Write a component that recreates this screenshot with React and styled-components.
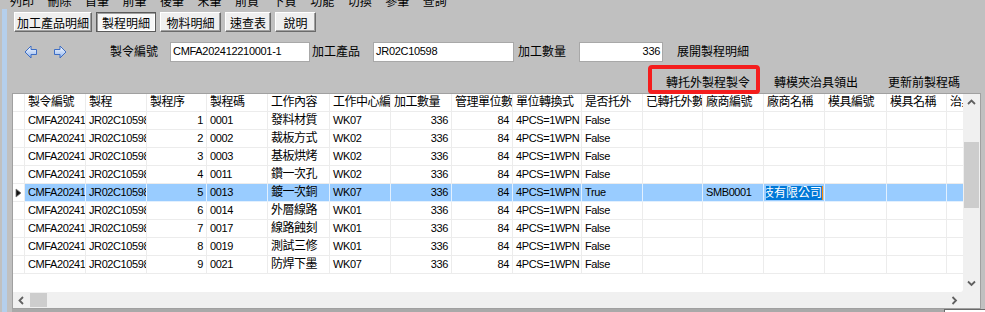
import React from "react";
import styled, { createGlobalStyle } from "styled-components";

const Global = createGlobalStyle`
  html, body { margin: 0; padding: 0; }
  body {
    background: #c0c0c0;
    font-family: "Liberation Sans", "Noto Sans CJK TC", sans-serif;
    font-size: 12px;
    color: #000;
    width: 985px;
    height: 312px;
    overflow: hidden;
  }
`;

const Page = styled.div`
  display: flex;
  flex-direction: column;
  height: 312px;
  overflow: hidden;
`;

const MenuBar = styled.div`
  height: 9px;
  overflow: hidden;
  display: flex;
  gap: 13.5px;
  padding-left: 10px;
`;

const MenuItem = styled.span`
  display: block;
  line-height: 13px;
  margin-top: -4px;
  white-space: nowrap;
`;

const Body = styled.div`
  flex: 1;
  display: flex;
  min-height: 0;
`;

const Strip = styled.div`
  width: 5px;
  margin-left: 2px;
  background: #b5cfec;
`;

const Content = styled.div`
  flex: 1;
  display: flex;
  flex-direction: column;
  padding: 0 4px 0 5px;
  min-width: 0;
`;

const Tabs = styled.div`
  display: flex;
  gap: 4px;
  margin-top: 3px;
  padding-left: 2px;
`;

const Tab = styled.button`
  width: ${(p) => p.$w}px;
  height: 20px;
  padding: 0;
  font: inherit;
  font-size: 12px;
  color: #000;
  background: ${(p) => (p.$active ? "#f7f7f7" : "#efefef")};
  border: 1px solid;
  border-color: ${(p) =>
    p.$active ? "#5a5a5a" : "#ffffff #6a6a6a #6a6a6a #ffffff"};
  box-shadow: ${(p) =>
    p.$active
      ? "inset 1px 1px 0 #a0a0a0, inset -1px -1px 0 #ffffff"
      : "inset -1px -1px 0 #a0a0a0"};
  display: flex;
  align-items: center;
  justify-content: center;
  white-space: nowrap;
`;

const FormRow = styled.div`
  display: flex;
  align-items: center;
  height: 20px;
  margin-top: 10px;
`;

const NavButton = styled.span`
  display: flex;
  width: 14px;
  height: 14px;
  margin-left: ${(p) => p.$ml}px;
`;

const Label = styled.span`
  margin-left: ${(p) => p.$ml}px;
  white-space: nowrap;
  line-height: 20px;
`;

const Input = styled.div`
  box-sizing: border-box;
  margin-left: ${(p) => p.$ml}px;
  width: ${(p) => p.$w}px;
  height: 20px;
  background: #fff;
  border: 1px solid #a8a8a8;
  padding: 0 2px;
  font-size: 11px;
  line-height: 16px;
  letter-spacing: -0.3px;
  text-align: ${(p) => (p.$right ? "right" : "left")};
  white-space: nowrap;
  overflow: hidden;
`;

const ActionRow = styled.div`
  display: flex;
  justify-content: flex-end;
  padding-right: 3px;
  margin-top: 8px;
  margin-bottom: 1px;
`;

const FlatButton = styled.button`
  position: relative;
  width: 108px;
  height: 22px;
  padding: 0;
  font: inherit;
  font-size: 12px;
  color: #000;
  background: transparent;
  border: none;
  white-space: nowrap;
  &::after {
    content: "";
    display: ${(p) => (p.$marked ? "block" : "none")};
    position: absolute;
    left: -6px;
    right: 2px;
    top: -5px;
    bottom: -2px;
    border: 4px solid #f41d1d;
    border-radius: 4px;
    z-index: 2;
  }
`;

const GridBox = styled.div`
  box-sizing: border-box;
  height: 216px;
  border: 1px solid #a0a0a0;
  display: grid;
  grid-template-columns: 1fr 17px;
  grid-template-rows: 1fr 16px;
  background: #f0f0f0;
`;

const DataArea = styled.div`
  background: #fff;
  overflow: hidden;
  border-bottom-right-radius: 3px;
`;

const TEMPLATE =
  "12px 61px 61px 60px 61px 62px 61px 61px 61px 69px 61px 60px 61px 61px 62px 60px 61px";

const Row = styled.div`
  display: grid;
  grid-template-columns: ${TEMPLATE};
  width: max-content;
  height: 18px;
`;

const Cell = styled.div`
  box-sizing: border-box;
  height: 18px;
  padding: 0 3px;
  line-height: 17px;
  border-right: 1px solid ${(p) => (p.$sel ? "#e2f0fe" : "#ececec")};
  border-bottom: 1px solid ${(p) => (p.$sel ? "#e2f0fe" : "#ececec")};
  background: ${(p) => (p.$sel ? "#99ccff" : "#fff")};
  text-align: ${(p) => (p.$right ? "right" : "left")};
  white-space: nowrap;
  overflow: hidden;
  font-size: ${(p) => (p.$latin ? "11px" : "12px")};
  letter-spacing: ${(p) => (p.$latin ? "-0.4px" : "-0.5px")};
`;

const HeadMark = styled.div`
  box-sizing: border-box;
  height: 18px;
  border-right: 1px solid #ececec;
  border-bottom: 1px solid #ececec;
  background: #fff;
  display: flex;
  align-items: center;
  justify-content: center;
`;

const EditorCell = styled.div`
  box-sizing: border-box;
  height: 18px;
  border-right: 1px solid #e2f0fe;
  border-bottom: 1px solid #e2f0fe;
  background: #99ccff;
  display: flex;
  align-items: center;
  padding-left: 2px;
`;

const EditorText = styled.div`
  width: 56px;
  overflow: hidden;
  display: flex;
  justify-content: flex-end;
`;

const Selection = styled.span`
  flex-shrink: 0;
  background: #0078d7;
  color: #fff;
  line-height: 14px;
  white-space: nowrap;
`;

const Caret = styled.span`
  width: 1px;
  height: 14px;
  background: #ff8a00;
`;

const VScroll = styled.div`
  display: flex;
  flex-direction: column;
  background: #f0f0f0;
`;

const ArrowBox = styled.div`
  width: ${(p) => (p.$w ? `${p.$w}px` : "auto")};
  height: ${(p) => (p.$h ? `${p.$h}px` : "auto")};
  display: flex;
  align-items: center;
  justify-content: center;
  flex-shrink: 0;
`;

const VThumb = styled.div`
  margin: 31px 1px 0 1px;
  height: 66px;
  background: #cdcdcd;
`;

const Spacer = styled.div`
  flex: 1;
`;

const HScroll = styled.div`
  display: flex;
  background: #f0f0f0;
`;

const HThumb = styled.div`
  width: 17px;
  margin: 1px 0;
  background: #cdcdcd;
`;

const Corner = styled.div`
  background: #f0f0f0;
`;

const Footer = styled.div`
  flex: 1;
  display: flex;
  justify-content: flex-end;
  background: #a9a9a9;
  margin-right: -4px;
`;

const FooterBox = styled.div`
  width: 40px;
  background: #fff;
  border-top: 1px solid #6a6a6a;
  border-left: 1px solid #6a6a6a;
`;

const Chevron = ({ dir }) => {
  const pts = {
    up: "1,5 4.5,1.5 8,5",
    down: "1,1.5 4.5,5 8,1.5",
    left: "5,1 1.5,4.5 5,8",
    right: "1.5,1 5,4.5 1.5,8",
  }[dir];
  const vertical = dir === "up" || dir === "down";
  return (
    <svg
      width={vertical ? 9 : 7}
      height={vertical ? 7 : 9}
      viewBox={vertical ? "0 0 9 7" : "0 0 7 9"}
    >
      <polyline points={pts} fill="none" stroke="#606060" strokeWidth="1.8" />
    </svg>
  );
};

const NavArrow = ({ dir, id }) => (
  <svg width="14" height="14" viewBox="0 0 14 14">
    <defs>
      <linearGradient id={id} x1="0" y1="0" x2="0" y2="1">
        <stop offset="0" stopColor="#ffffff" />
        <stop offset="1" stopColor="#8db3ee" />
      </linearGradient>
    </defs>
    <path
      d={
        dir === "left"
          ? "M1 7 L7 1 V4.5 H12.5 V9.5 H7 V13 Z"
          : "M13 7 L7 1 V4.5 H1.5 V9.5 H7 V13 Z"
      }
      fill={`url(#${id})`}
      stroke="#3d6dc4"
      strokeWidth="1"
      strokeLinejoin="round"
    />
  </svg>
);

const RowPointer = () => (
  <svg width="7" height="10" viewBox="0 0 7 10">
    <polygon points="1,1 6,5 1,9" fill="#111" stroke="#777" strokeWidth="0.8" />
  </svg>
);

const menu = ["列印", "刪除", "首筆", "前筆", "後筆", "末筆", "前頁", "下頁", "功能", "切換", "參筆", "查詢"];

const tabs = [
  { label: "加工產品明細", w: 78 },
  { label: "製程明細", w: 60, active: true },
  { label: "物料明細", w: 61 },
  { label: "速查表", w: 46 },
  { label: "說明", w: 41 },
];

const columns = [
  { h: "製令編號", latin: true },
  { h: "製程", latin: true },
  { h: "製程序", right: true, latin: true },
  { h: "製程碼", latin: true },
  { h: "工作內容" },
  { h: "工作中心編號", latin: true },
  { h: "加工數量", right: true, latin: true },
  { h: "管理單位數量", right: true, latin: true },
  { h: "單位轉換式", latin: true },
  { h: "是否托外", latin: true },
  { h: "已轉托外數量", right: true, latin: true },
  { h: "廠商編號", latin: true },
  { h: "廠商名稱" },
  { h: "模具編號" },
  { h: "模具名稱" },
  { h: "治具編號" },
];

const steps = [
  ["1", "0001", "發料材質", "WK07"],
  ["2", "0002", "裁板方式", "WK02"],
  ["3", "0003", "基板烘烤", "WK02"],
  ["4", "0011", "鑽一次孔", "WK02"],
  ["5", "0013", "鍍一次銅", "WK07"],
  ["6", "0014", "外層線路", "WK01"],
  ["7", "0017", "線路蝕刻", "WK01"],
  ["8", "0019", "測試三修", "WK01"],
  ["9", "0021", "防焊下墨", "WK07"],
];

const rows = steps.map(([seq, code, work, wc], i) => {
  const selected = i === 4;
  return {
    selected,
    values: [
      "CMFA202412210001-1",
      "JR02C10598",
      seq,
      code,
      work,
      wc,
      "336",
      "84",
      "4PCS=1WPN",
      selected ? "True" : "False",
      "",
      selected ? "SMB0001" : "",
      selected ? "EDITOR" : "",
      "",
      "",
      "",
    ],
  };
});

export default function App() {
  return (
    <>
      <Global />
      <Page>
        <MenuBar>
          {menu.map((m) => (
            <MenuItem key={m}>{m}</MenuItem>
          ))}
        </MenuBar>
        <Body>
          <Strip />
          <Content>
            <Tabs>
              {tabs.map((t) => (
                <Tab key={t.label} $w={t.w} $active={t.active}>
                  {t.label}
                </Tab>
              ))}
            </Tabs>
            <FormRow>
              <NavButton $ml={12}>
                <NavArrow dir="left" id="navL" />
              </NavButton>
              <NavButton $ml={15}>
                <NavArrow dir="right" id="navR" />
              </NavButton>
              <Label $ml={43}>製令編號</Label>
              <Input $ml={12} $w={140}>CMFA202412210001-1</Input>
              <Label $ml={2}>加工產品</Label>
              <Input $ml={13} $w={141}>JR02C10598</Input>
              <Label $ml={4}>加工數量</Label>
              <Input $ml={13} $w={84} $right>336</Input>
              <Label $ml={14}>展開製程明細</Label>
            </FormRow>
            <ActionRow>
              <FlatButton $marked>轉托外製程製令</FlatButton>
              <FlatButton>轉模夾治具領出</FlatButton>
              <FlatButton>更新前製程碼</FlatButton>
            </ActionRow>
            <GridBox>
              <DataArea>
                <Row>
                  <HeadMark />
                  {columns.map((c) => (
                    <Cell key={c.h}>{c.h}</Cell>
                  ))}
                </Row>
                {rows.map((r, ri) => (
                  <Row key={ri}>
                    <HeadMark>{r.selected && <RowPointer />}</HeadMark>
                    {r.values.map((v, ci) =>
                      v === "EDITOR" ? (
                        <EditorCell key={ci}>
                          <EditorText>
                            <Selection>科技有限公司</Selection>
                          </EditorText>
                          <Caret />
                        </EditorCell>
                      ) : (
                        <Cell
                          key={ci}
                          $right={columns[ci].right}
                          $latin={columns[ci].latin}
                          $sel={r.selected}
                        >
                          {v}
                        </Cell>
                      )
                    )}
                  </Row>
                ))}
              </DataArea>
              <VScroll>
                <ArrowBox $h={17}>
                  <Chevron dir="up" />
                </ArrowBox>
                <VThumb />
                <Spacer />
                <ArrowBox $h={17}>
                  <Chevron dir="down" />
                </ArrowBox>
              </VScroll>
              <HScroll>
                <ArrowBox $w={17}>
                  <Chevron dir="left" />
                </ArrowBox>
                <HThumb />
                <Spacer />
                <ArrowBox $w={17}>
                  <Chevron dir="right" />
                </ArrowBox>
              </HScroll>
              <Corner />
            </GridBox>
            <Footer>
              <FooterBox />
            </Footer>
          </Content>
        </Body>
      </Page>
    </>
  );
}
